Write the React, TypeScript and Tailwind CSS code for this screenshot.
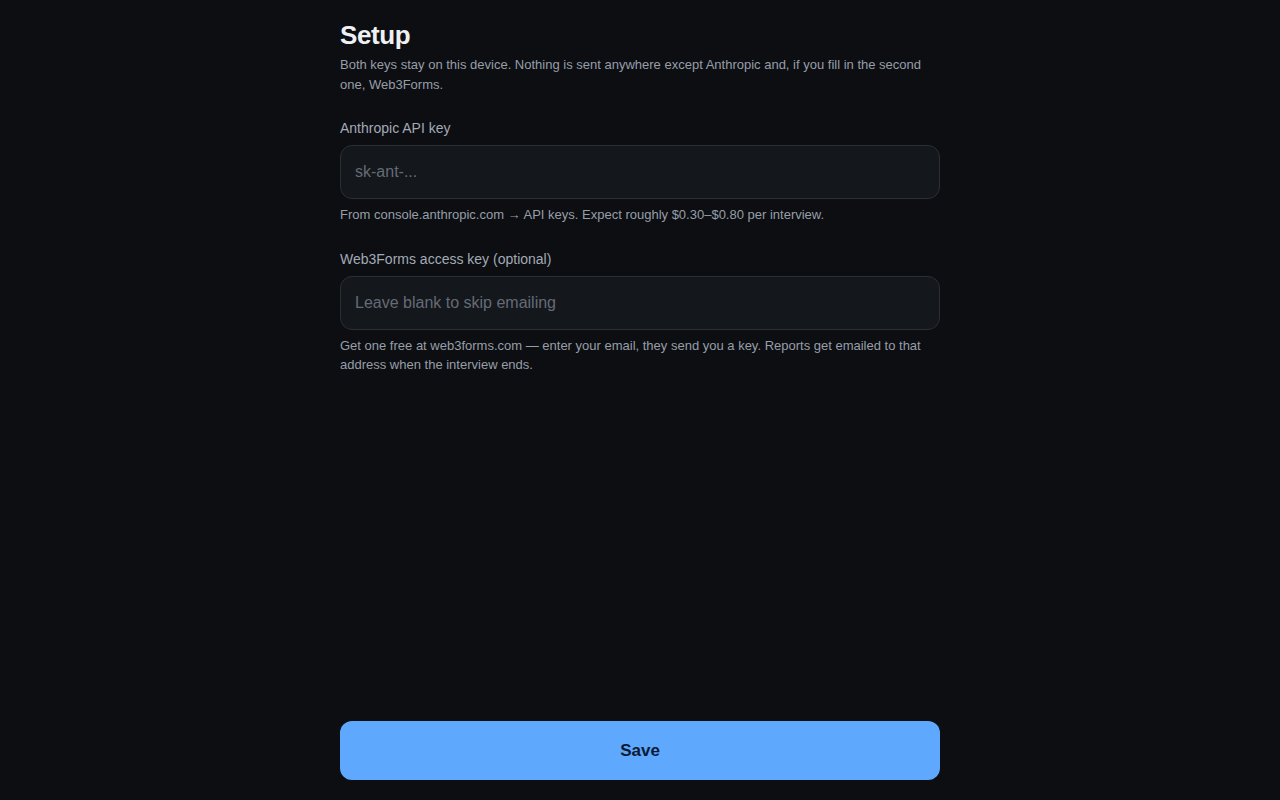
export default function App() {
  return (
    <div
      className="min-h-screen bg-[#0c0e12] flex flex-col"
      style={{ fontFamily: '"Liberation Sans", Arial, sans-serif' }}
    >
      <div className="w-[600px] mx-auto flex flex-col flex-1 pt-[20px] pb-[20px]">
        <h1 className="text-[26px] leading-[31px] font-bold text-[#eef0f3] tracking-[-0.4px]">Setup</h1>
        <p className="mt-[4px] text-[13px] leading-5 text-[#979ea8]">
          Both keys stay on this device. Nothing is sent anywhere except Anthropic and, if you fill in the second
          one, Web3Forms.
        </p>

        <div className="mt-[23px]">
          <label className="block text-[14px] leading-5 text-[#a3aab4]">Anthropic API key</label>
          <input
            type="text"
            placeholder="sk-ant-..."
            className="mt-[7px] w-full h-[54px] rounded-xl bg-[#14171c] border border-[#2a2e35] px-[14px] text-[16px] text-[#e5e7eb] placeholder:text-[#656b75] outline-none"
          />
          <p className="mt-[6px] text-[13px] leading-[19.5px] text-[#979ea8]">
            From console.anthropic.com → API keys. Expect roughly $0.30–$0.80 per interview.
          </p>
        </div>

        <div className="mt-[24px]">
          <label className="block text-[14px] leading-5 text-[#a3aab4]">Web3Forms access key (optional)</label>
          <input
            type="text"
            placeholder="Leave blank to skip emailing"
            className="mt-[7px] w-full h-[54px] rounded-xl bg-[#14171c] border border-[#2a2e35] px-[14px] text-[16px] text-[#e5e7eb] placeholder:text-[#656b75] outline-none"
          />
          <p className="mt-[6px] text-[13px] leading-[19.5px] text-[#979ea8]">
            Get one free at web3forms.com — enter your email, they send you a key. Reports get emailed to that
            address when the interview ends.
          </p>
        </div>

        <div className="flex-1" />

        <button className="w-full h-[59px] rounded-xl bg-[#5ea8fd] text-[#0b1b36] text-[17px] font-bold">
          Save
        </button>
      </div>
    </div>
  );
}
